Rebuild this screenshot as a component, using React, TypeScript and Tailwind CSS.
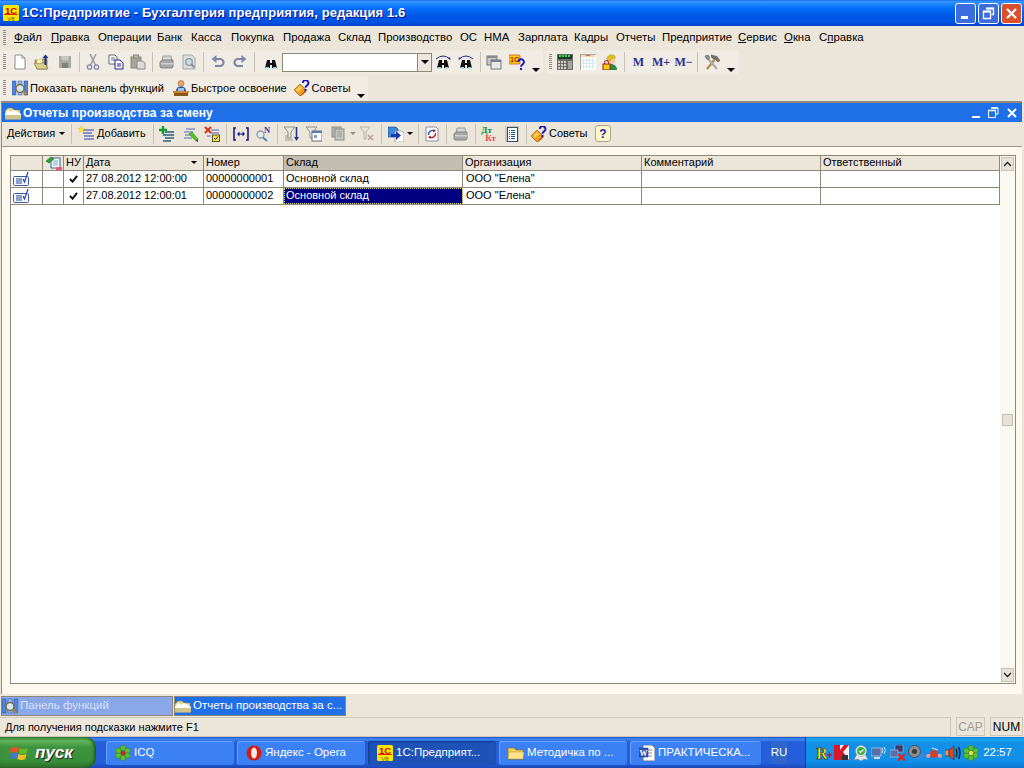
import React from "react";

const sans = "font-['Liberation_Sans',Arial,sans-serif]";

const Svg = ({ children, size = 16, crisp }: { children: React.ReactNode; size?: number; crisp?: boolean }) => (
  <svg width={size} height={size} viewBox="0 0 16 16" shapeRendering={crisp ? "crispEdges" : undefined} className="block shrink-0">
    {children}
  </svg>
);

const Logo1C = ({ size = 16 }: { size?: number }) => (
  <Svg size={size}>
    <rect width="16" height="16" rx="1.5" fill="#ffe600" />
    <text x="8" y="8.500" textAnchor="middle" fontSize="9.500" fontWeight="700" fill="#d40000" fontFamily="Liberation Sans">1С</text>
    <rect x="1" y="9" width="14" height="0.8" fill="#d40000" />
    <text x="8" y="15.500" textAnchor="middle" fontSize="6" fill="#6b5a00" fontFamily="Liberation Sans">V8</text>
  </Svg>
);

const NewDoc = () => (
  <Svg><path d="M3 1h7l3 3v11H3z" fill="#fff" stroke="#8d8d8d" /><path d="M10 1v3h3" fill="#e4e4e4" stroke="#8d8d8d" /></Svg>
);
const OpenFolder = () => (
  <Svg>
    <path d="M1 6h5l1-1h6v10H3z" fill="#b9b06a" stroke="#77703c" strokeWidth=".7" />
    <path d="M0 9h11l3 6H3z" fill="#d8cf8e" stroke="#77703c" strokeWidth=".7" />
    <path d="M3 6l5-1v4H3z" fill="#fff6b8" />
    <path d="M11.5 11V3" stroke="#1a2f8c" strokeWidth="2" /><path d="M8.5 4l3-3.5 3 3.5z" fill="#1a2f8c" />
  </Svg>
);
const Save = () => (
  <Svg><rect x="2" y="2" width="12" height="12" fill="#a9a9a1" /><rect x="4.5" y="2" width="7" height="4.5" fill="#c9c9c2" /><rect x="5" y="9" width="6" height="5" fill="#80807a" /></Svg>
);
const Scissors = () => (
  <Svg>
    <path d="M5 0l5.500 11M11 0L5.500 11" stroke="#9a9a9a" strokeWidth="1.500" fill="none" />
    <circle cx="4.500" cy="13" r="2.200" fill="none" stroke="#7f87a8" strokeWidth="1.300" />
    <circle cx="11.500" cy="13" r="2.200" fill="none" stroke="#7f87a8" strokeWidth="1.300" />
  </Svg>
);
const Copy = () => (
  <Svg>
    <path d="M1 1h6l2 2v7H1z" fill="#fff" stroke="#666" />
    <path d="M3 4h4M3 6h4" stroke="#666" />
    <path d="M7 6h5l3 3v6H7z" fill="#fff" stroke="#1c1f88" />
    <path d="M9 10h4M9 12h4" stroke="#1c1f88" />
  </Svg>
);
const Paste = () => (
  <Svg>
    <rect x="1" y="3" width="10" height="11" fill="#a8a498" stroke="#88857a" />
    <rect x="3.500" y="1" width="5" height="3" fill="#bdbab0" stroke="#88857a" />
    <path d="M7 7h5l3 2v6H7z" fill="#dcdcd8" stroke="#8a8a8a" />
  </Svg>
);
const Printer = () => (
  <Svg>
    <path d="M4 2h8l1 5H3z" fill="#d6d6d6" stroke="#9a9a9a" />
    <path d="M1 8l2-2h11v7l-1 1H2l-1-1z" fill="#a7a7a7" stroke="#858585" />
    <rect x="2" y="9" width="12" height="1.500" fill="#d0d0d0" />
  </Svg>
);
const Preview = () => (
  <Svg>
    <path d="M2 1h9l3 3v11H2z" fill="#dedede" stroke="#a5a5a5" />
    <circle cx="8" cy="8" r="3.300" fill="#c8dde3" stroke="#8a9aa2" strokeWidth="1.300" />
    <path d="M10.500 10.500l3 3" stroke="#8a8a8a" strokeWidth="1.800" />
  </Svg>
);
const Undo = ({ flip }: { flip?: boolean }) => (
  <Svg>
    <g transform={flip ? "matrix(-1 0 0 1 16 0)" : undefined}>
      <path d="M5 5h5a3.500 3.500 0 010 7H5" fill="none" stroke="#7e86a8" strokeWidth="2.200" />
      <path d="M6.500 1L1.500 5l5 4z" fill="#7e86a8" />
    </g>
  </Svg>
);
const Binoculars = ({ arc }: { arc?: "next" | "prev" }) => (
  <Svg>
    {arc && <path d="M1 5Q8 -1 15 5" fill="none" stroke="#1c2f8c" strokeWidth="1" />}
    {arc === "next" && <path d="M15.500 6l-.5-3-2 1.500z" fill="#1c2f8c" />}
    {arc === "prev" && <path d="M.5 6l.5-3 2 1.500z" fill="#1c2f8c" />}
    <path d="M4 6h3v3h2V6h3l2 8H9v-3H7v3H2z" fill="#111" />
    <rect x="2.500" y="13" width="3.500" height="1.500" fill="#7fd8d8" />
    <rect x="10" y="13" width="3.500" height="1.500" fill="#7fd8d8" />
  </Svg>
);
const Windows = () => (
  <Svg>
    <rect x="1" y="2" width="10" height="9" fill="#c9c9c4" stroke="#777" />
    <rect x="1" y="2" width="10" height="2" fill="#8a8a8a" />
    <rect x="5" y="6" width="10" height="9" fill="#e8e8e4" stroke="#777" />
    <rect x="5" y="6" width="10" height="2" fill="#6f7f9e" />
  </Svg>
);
const Question = ({ x = 0, y = 0 }: { x?: number; y?: number }) => (
  <g transform={`translate(${x} ${y})`}>
    <path d="M.8 3a2.800 2.800 0 115.400 1c-.6 1.500-2.700 1.800-2.700 3.800" fill="none" stroke="#1414c0" strokeWidth="1.900" />
    <rect x="2.500" y="9" width="2" height="2" fill="#1414c0" />
  </g>
);
const Help1C = () => (
  <Svg>
    <rect x="0" y="1" width="11" height="9" rx="1" fill="#ffd800" stroke="#c33" strokeWidth=".7" />
    <text x="5.500" y="8" textAnchor="middle" fontSize="7" fontWeight="700" fill="#c00000" fontFamily="Liberation Sans">1С</text>
    <Question x={8.500} y={5} />
  </Svg>
);
const Calc = () => (
  <Svg crisp>
    <rect x="0" y="0" width="16" height="16" fill="#6d6d68" />
    <rect x="1" y="1" width="14" height="4" fill="#1f3a23" />
    <path d="M2 2h2M5 2h2M8 2h2M11 2h2" stroke="#36e05c" strokeWidth="2" />
    <g fill="#cfcfc8"><rect x="1" y="7" width="2" height="2" /><rect x="4" y="7" width="2" height="2" /><rect x="7" y="7" width="2" height="2" /><rect x="1" y="10" width="2" height="2" /><rect x="4" y="10" width="2" height="2" /><rect x="7" y="10" width="2" height="2" /><rect x="1" y="13" width="2" height="2" /><rect x="4" y="13" width="2" height="2" /><rect x="7" y="13" width="2" height="2" /></g>
    <rect x="11" y="7" width="4" height="8" fill="#a5a59e" />
  </Svg>
);
const Calendar = () => (
  <Svg crisp>
    <rect x="0" y="0" width="16" height="16" fill="#fff" stroke="#a8a8a0" />
    <rect x="1" y="1" width="14" height="2" fill="#f4d9a8" />
    <rect x="6" y="1" width="4" height="1" fill="#e55" />
    <g stroke="#cfeaf0" strokeWidth="1"><path d="M3 4v11M6 4v11M9 4v11M12 4v11M1 6h14M1 9h14M1 12h14" /></g>
  </Svg>
);
const UserLock = () => (
  <Svg>
    <path d="M4 16c0-4 2-6 5-6s6 2 6 6z" fill="#2f8a4a" />
    <circle cx="9.500" cy="6" r="4" fill="#f0c8a0" />
    <path d="M5 7c-1-5 3-7 6-6 2 .5 3 2 2 3-3 0-4 1-5 3z" fill="#e0c020" stroke="#a08a10" strokeWidth=".4" />
    <rect x="1" y="10" width="7" height="6" fill="#f4d000" stroke="#a01818" />
    <path d="M2.500 10V8.500a2 2 0 014 0V10" fill="none" stroke="#a01818" />
  </Svg>
);
const Tools = () => (
  <Svg>
    <path d="M3 15L11 5" stroke="#b98b4a" strokeWidth="2.200" />
    <path d="M7 1l6 1.500 3 4-2 1.500-2.500-2.500L8 4z" fill="#777" stroke="#444" strokeWidth=".5" />
    <path d="M13 15L5 6" stroke="#a8a8a8" strokeWidth="2" />
    <path d="M1 2l3-1 1.500 2L5 6 2.500 5z" fill="#8d8d8d" stroke="#555" strokeWidth=".5" />
  </Svg>
);
const PanelFunc = () => (
  <Svg>
    <rect x="0" y="1" width="4" height="14" fill="#4e86d8" stroke="#1e4aa0" strokeWidth=".5" />
    <rect x="6" y="1" width="4" height="14" fill="#9cbdf0" stroke="#1e4aa0" strokeWidth=".5" />
    <rect x="12" y="1" width="4" height="14" fill="#4e86d8" stroke="#1e4aa0" strokeWidth=".5" />
    <circle cx="8" cy="8.500" r="4" fill="#e8f4f4" fillOpacity=".8" stroke="#7a6a3a" strokeWidth="1.400" />
    <path d="M11 11.500l3.500 3.500" stroke="#b8862a" strokeWidth="2" />
  </Svg>
);
const Learn = () => (
  <Svg>
    <circle cx="8" cy="3.500" r="3" fill="#e8a868" stroke="#8a4a1a" strokeWidth=".5" />
    <path d="M3 11c0-3 2-4.500 5-4.500s5 1.500 5 4.500z" fill="#2c55a8" />
    <rect x="5" y="8" width="6" height="3.500" fill="#9cc0ec" />
    <rect x="0" y="11" width="16" height="2" fill="#c8862c" />
    <rect x="1" y="13" width="14" height="3" fill="#8a5518" />
  </Svg>
);
const Tips = () => (
  <Svg>
    <path d="M0 10l6-6 6 6-6 6z" fill="#f4a018" stroke="#8a4a0a" strokeWidth=".6" />
    <path d="M2 10l4-4 2 2-4 4z" fill="#ffd060" />
    <path d="M6 16l6-6v2l-5 4z" fill="#c04a0a" />
    <Question x={8} y={0} />
  </Svg>
);
const Folder = () => (
  <Svg>
    <path d="M0 6l3-3h4l2 2h6v9H0z" fill="#e6d98a" stroke="#8f8752" strokeWidth=".5" />
    <path d="M0 9l3-4 3 2 3-2 4 2 3 2v5H0z" fill="#fff" />
    <path d="M0 10h16v4.500H0z" fill="#cfc58c" />
  </Svg>
);
const YellowFolder = () => (
  <Svg>
    <path d="M0 3h6l2 2h7v9H0z" fill="#f4cf5c" stroke="#8f6f1c" strokeWidth=".6" />
    <path d="M1 7h15l-1 7H0z" fill="#ffe38a" stroke="#a8842c" strokeWidth=".5" />
  </Svg>
);
const AddList = () => (
  <Svg>
    <path d="M5 4h11M5 7h9M6 10h10M6 13h10" stroke="#8b90c4" strokeWidth="2" />
    <path d="M3.500 0l1 2 2.500.5-2 1.500.5 2.500-2-1.200-2 1.200.5-2.500-2-1.500 2.500-.5z" fill="#ffe84a" stroke="#d6b820" strokeWidth=".4" />
  </Svg>
);
const PlusList = () => (
  <Svg>
    <path d="M6 6h9M4 9h11M6 12h9M4 15h8" stroke="#2a5f7f" strokeWidth="1.500" />
    <path d="M4 0v8M0 4h8" stroke="#11a02a" strokeWidth="2.400" />
  </Svg>
);
const EditList = () => (
  <Svg>
    <path d="M4 3h9M2 6h9M3 9h8M2 12h8" stroke="#8b90c4" strokeWidth="1.700" />
    <path d="M7 8l3-2 6 7-2 2z" fill="#50c820" stroke="#2a7a10" strokeWidth=".5" />
    <path d="M14 15l2-2v3z" fill="#2a2a2a" />
  </Svg>
);
const DelList = () => (
  <Svg>
    <path d="M7 4h8M7 7h8M3 10h4" stroke="#8b90c4" strokeWidth="1.700" />
    <path d="M1 1l6 6M7 1L1 7" stroke="#d8301a" strokeWidth="2" />
    <rect x="8.500" y="9" width="7" height="6.500" fill="#f4e060" stroke="#5a5a20" />
    <path d="M10 12l1.500 1.500 2.500-3" stroke="#222" fill="none" />
  </Svg>
);
const Braces = () => (
  <Svg>
    <path d="M3 2H1v12h2M13 2h2v12h-2" stroke="#10108a" strokeWidth="1.500" fill="none" />
    <path d="M5 8h6" stroke="#10108a" strokeWidth="1" />
    <path d="M6.500 5.500L4 8l2.500 2.500zM9.500 5.500L12 8l-2.500 2.500z" fill="#10108a" />
  </Svg>
);
const SearchN = () => (
  <Svg>
    <circle cx="5.500" cy="8.500" r="3.500" fill="#dff0f4" stroke="#8e9aa4" strokeWidth="1.300" />
    <path d="M8 11.500l4 3.500" stroke="#3d8ac4" strokeWidth="2" />
    <text x="12" y="7" textAnchor="middle" fontSize="8.500" fontWeight="700" fill="#2b3fb0" fontFamily="Liberation Serif">N</text>
  </Svg>
);
const Funnel = ({ color = "#8f8f88" }: { color?: string }) => (
  <path d="M0 1h11L7 6v6H4V6z" fill="#e8e8e0" stroke={color} strokeWidth="1" />
);
const FilterDown = () => (
  <Svg>
    <Funnel />
    <path d="M12.500 1v11" stroke="#223a8c" strokeWidth="1.600" />
    <path d="M10 11l2.500 4 2.500-4z" fill="#223a8c" />
    <path d="M1 10h3M1 12h3M1 14h8" stroke="#999" />
  </Svg>
);
const FilterWin = () => (
  <Svg>
    <Funnel />
    <rect x="6" y="5" width="10" height="10" fill="#fff" stroke="#707070" />
    <rect x="6" y="5" width="10" height="2" fill="#5c7ab0" />
    <rect x="8" y="9" width="3" height="3" fill="#7e9fd0" />
  </Svg>
);
const FilterStack = () => (
  <Svg>
    <rect x="1" y="1" width="9" height="10" fill="#b5b5ae" stroke="#8e8e88" />
    <rect x="4" y="3" width="9" height="11" fill="#c5c5be" stroke="#8e8e88" />
    <path d="M6 6h5M6 8h5M6 10h5" stroke="#9a9a94" />
  </Svg>
);
const FilterOff = () => (
  <Svg>
    <path d="M1 1h10L7 6v7H5V6z" fill="#e8e4d8" stroke="#b5b2a6" />
    <path d="M9 9l5 5M14 9l-5 5" stroke="#b79f96" strokeWidth="1.400" />
  </Svg>
);
const Export = () => (
  <Svg>
    <path d="M0 1h8l2 2v8H0z" fill="#3a8ae0" stroke="#16408a" strokeWidth=".6" />
    <path d="M7 5h6l3 2v9H7z" fill="#fff" stroke="#777" strokeWidth=".6" />
    <path d="M3 8h5V5l5 4.500L8 14v-3H3z" fill="#1a3aa8" />
  </Svg>
);
const Refresh = () => (
  <Svg>
    <path d="M2 1h10l2 2v12H2z" fill="#fff" stroke="#8c8ca8" />
    <path d="M4.500 9a4 4 0 016-4" fill="none" stroke="#2a50c0" strokeWidth="1.300" />
    <path d="M11.500 7a4 4 0 01-6 4" fill="none" stroke="#c02020" strokeWidth="1.300" />
    <path d="M9.500 3l2.500 2-3 1.200zM6.500 13l-2.500-2 3-1.200z" fill="#a01818" />
  </Svg>
);
const DtKt = () => (
  <div className="w-4 h-4 flex flex-col font-['Liberation_Serif',serif] font-bold text-[9px] leading-[8px]">
    <span className="text-[#108a30]">Дт</span>
    <span className="text-[#f04848] ml-[4px]">Кт</span>
  </div>
);
const DocList = () => (
  <Svg crisp>
    <rect x="1" y="0" width="14" height="16" fill="#c8c8c0" />
    <rect x="3" y="1" width="10" height="14" fill="#fff" stroke="#30506a" />
    <path d="M5 4h1M7 4h4M5 6h1M7 6h4M5 8h1M7 8h4M5 10h1M7 10h4M5 12h1M7 12h4" stroke="#1a5a88" />
  </Svg>
);
const RowDoc = () => (
  <svg width="16" height="14" viewBox="0 0 16 14" className="block">
    <rect x=".5" y="4.500" width="15" height="9" rx="1" fill="#f2f5fb" stroke="#3d5d98" />
    <path d="M3 7h6M3 9h6M3 11h6" stroke="#2a4f90" />
    <path d="M10 7l1.500 3L15 0" stroke="#2a3fc0" strokeWidth="1.200" fill="none" />
  </svg>
);
const HeaderPic = () => (
  <Svg>
    <path d="M5 3h9v10H5z" fill="#fff" stroke="#1e6a98" />
    <path d="M7 6h5M7 8h5M7 10h5" stroke="#5ab0d8" />
    <path d="M0 6l5-4 3 2-5 4z" fill="#30a030" stroke="#155a15" strokeWidth=".5" />
    <rect x="10" y="12" width="6" height="3" fill="#f05a7a" />
  </Svg>
);
const Flower = ({ center = "#d42020" }: { center?: string }) => (
  <Svg>
    <g fill="#5cc030" stroke="#2f7a16" strokeWidth=".5">
      <circle cx="8" cy="3" r="2.700" /><circle cx="12.500" cy="5.700" r="2.700" /><circle cx="12.500" cy="10.500" r="2.700" />
      <circle cx="8" cy="13" r="2.700" /><circle cx="3.500" cy="10.500" r="2.700" /><circle cx="3.500" cy="5.700" r="2.700" />
    </g>
    <circle cx="8" cy="8" r="2.200" fill={center} />
  </Svg>
);
const Opera = () => (
  <Svg><circle cx="8" cy="8" r="7.500" fill="#d81a10" /><ellipse cx="8" cy="8" rx="3" ry="5.500" fill="#fbe9e2" /></Svg>
);
const Word = () => (
  <Svg>
    <path d="M4 0h9l3 3v13H4z" fill="#fff" stroke="#778" />
    <path d="M7 5h6M7 8h6M7 11h6" stroke="#88a" />
    <rect x="0" y="3" width="9" height="9" fill="#2f55c0" stroke="#16307a" strokeWidth=".5" />
    <text x="4.500" y="10.500" textAnchor="middle" fontSize="8" fontWeight="700" fill="#fff" fontFamily="Liberation Serif">W</text>
  </Svg>
);
const XpFlag = () => (
  <svg width="20" height="20" viewBox="0 0 20 20" className="block">
    <path d="M1 5q4-2 8 0l-1.200 5q-4-2-8 0z" fill="#e8502a" />
    <path d="M10 5q4 2 8 0l-1.200 5q-4 2-8 0z" fill="#68b82a" />
    <path d="M-.200 11q4-2 8 0l-1.200 5q-4-2-8 0z" fill="#3a78e0" transform="translate(1.500 0)" />
    <path d="M8.500 11q4 2 8 0l-1.200 5q-4 2-8 0z" fill="#f4c020" />
  </svg>
);
const TrayR = () => (
  <Svg>
    <text x="6" y="14" textAnchor="middle" fontSize="16" fontWeight="700" fill="#ffe600" stroke="#111" strokeWidth=".5" fontFamily="Liberation Serif">R</text>
    <path d="M11 10h5M13.500 7.500v5" stroke="#e01010" strokeWidth="1.400" />
  </Svg>
);
const TrayK = () => (
  <Svg>
    <rect width="15" height="15" fill="#f4f4f4" />
    <path d="M0 0h6v5l4-5h5L9 7l6 8H0z" fill="#d8182a" />
    <path d="M8 10h6v5H8z" fill="#333" />
  </Svg>
);
const TrayBadge = () => (
  <Svg>
    <path d="M4 9l-3 6 4-1 3 2 3-2 4 1-3-6z" fill="#e8e8e8" stroke="#888" strokeWidth=".5" />
    <circle cx="8" cy="6" r="5.500" fill="#f0f0f0" stroke="#999" strokeWidth=".5" />
    <circle cx="8" cy="6" r="4" fill="#3fae3a" />
    <path d="M6 6l1.500 1.500 3-3" stroke="#fff" fill="none" strokeWidth="1.200" />
  </Svg>
);
const TrayNet = () => (
  <Svg>
    <rect x="0" y="3" width="10" height="8" fill="#5870a8" stroke="#dde" strokeWidth=".6" />
    <rect x="3" y="12" width="6" height="2" fill="#d8d8d8" />
    <path d="M11 3q2 2 0 5M13 2q3 3 0 7" fill="none" stroke="#dfe8f4" strokeWidth="1" />
  </Svg>
);
const TrayNetX = () => (
  <Svg>
    <rect x="5" y="0" width="8" height="7" fill="#3a3a6a" stroke="#bcc" strokeWidth=".5" />
    <rect x="0" y="5" width="8" height="7" fill="#5870a8" stroke="#dde" strokeWidth=".5" />
    <path d="M8 9l7 6.500M15 9l-7 6.500" stroke="#e8201a" strokeWidth="2" />
  </Svg>
);
const TraySpeaker = () => (
  <Svg>
    <circle cx="6.500" cy="6.500" r="6" fill="#8d8d8d" stroke="#333" strokeWidth=".6" />
    <circle cx="6.500" cy="6.500" r="2.500" fill="#3a3a3a" />
    <path d="M9 14q4-1 6-6" stroke="#6a7fe0" fill="none" strokeWidth="1.200" />
  </Svg>
);
const TrayMisc = () => (
  <Svg>
    <path d="M1 10h14" stroke="#ccc" strokeWidth="2" />
    <path d="M6 3l6 2" stroke="#dde" strokeWidth="1.300" />
    <circle cx="8" cy="9" r="4" fill="#cc4030" />
    <circle cx="2" cy="11" r="2" fill="#d8a090" />
    <circle cx="14" cy="11" r="2" fill="#d8a090" />
  </Svg>
);
const TrayVolume = () => (
  <Svg>
    <rect x="0" y="5" width="4" height="6" fill="#e89060" stroke="#222" strokeWidth=".5" />
    <path d="M4 5l5-4v14l-5-4z" fill="#d84a20" stroke="#222" strokeWidth=".5" />
    <path d="M11 4q2 4 0 8M13.500 2q3 6 0 12" fill="none" stroke="#111" strokeWidth="1.200" />
  </Svg>
);

const Grip = () => (
  <div className="h-[16px] w-[3px] ml-[3px] shrink-0 bg-[repeating-linear-gradient(to_bottom,#8f8b80_0,#8f8b80_1px,transparent_1px,transparent_2px)]" />
);
const Sep = () => <div className="w-px h-[20px] mx-[2.5px] bg-[#c5c0b4] shrink-0" />;
const Slot = ({ children }: { children: React.ReactNode }) => (
  <div className="w-[22.5px] h-full flex items-center justify-center shrink-0">{children}</div>
);
const DropArrow = () => (
  <div className="w-[15px] h-full flex items-end justify-center pb-[2px] shrink-0">
    <div className="w-0 h-0 border-x-[4px] border-x-transparent border-t-[4px] border-t-black" />
  </div>
);
const SmallArrow = ({ gray }: { gray?: boolean }) => (
  <div className={`w-0 h-0 border-x-[3px] border-x-transparent border-t-[3px] ${gray ? "border-t-[#8f8f88]" : "border-t-black"}`} />
);
const MText = ({ children }: { children: string }) => (
  <span className="font-['Liberation_Serif',serif] font-bold text-[12px] text-[#2a2f96]">{children}</span>
);

const menu: [string, number, number?][] = [
  ["Файл", 37, 0], ["Правка", 47, 0], ["Операции", 59], ["Банк", 34], ["Касса", 40], ["Покупка", 52],
  ["Продажа", 55], ["Склад", 40], ["Производство", 82], ["ОС", 24], ["НМА", 34], ["Зарплата", 56],
  ["Кадры", 42], ["Отчеты", 46], ["Предприятие", 76], ["Сервис", 46, 0], ["Окна", 35, 0], ["Справка", 60, 1],
];

const TitleBar = () => (
  <div className="h-[26px] shrink-0 flex items-center pl-[3px] pr-[2px] bg-[linear-gradient(to_bottom,#0a5ae0_0,#3a93ff_1px,#288eff_3px,#127dff_6px,#036ffc_8px,#0262ee_12px,#0057e5_16px,#0054e3_22px,#0045cf_25px,#003dd7_26px)]">
    <Logo1C />
    <span className={`ml-[3px] ${sans} font-bold text-[13px] tracking-[0.1px] text-white [text-shadow:1px_1px_0_#0f1089]`}>
      1С:Предприятие - Бухгалтерия предприятия, редакция 1.6
    </span>
    <div className="ml-auto flex gap-[2px]">
      <div className="w-[21px] h-[21px] rounded-[3px] border border-white bg-[#3c6de0] flex items-end pl-[5px] pb-[4px]">
        <div className="w-[7px] h-[3px] bg-white" />
      </div>
      <div className="w-[21px] h-[21px] rounded-[3px] border border-white bg-[#3c6de0] flex items-center justify-center">
        <svg width="13" height="13" viewBox="0 0 13 13"><path d="M4.500 1.500h7v6h-2M1.500 4.500h7v7h-7z" fill="none" stroke="#fff" strokeWidth="1.300" /><path d="M4 1.500h8M1 4.500h8" stroke="#fff" strokeWidth="2" /></svg>
      </div>
      <div className="w-[21px] h-[21px] rounded-[3px] border border-white bg-[#d9512c] flex items-center justify-center">
        <svg width="13" height="13" viewBox="0 0 13 13"><path d="M2 2l9 9M11 2l-9 9" stroke="#fff" strokeWidth="2.200" /></svg>
      </div>
    </div>
  </div>
);

const MenuBar = () => (
  <div className={`h-[23px] shrink-0 flex items-center pt-px text-[11.4px] text-black ${sans}`}>
    <Grip />
    <div className="w-[8px]" />
    {menu.map(([label, width, ul]) => (
      <div key={label} className="shrink-0" style={{ width }}>
        {ul === undefined ? label : (
          <>
            {label.slice(0, ul)}
            <span className="underline">{label[ul]}</span>
            {label.slice(ul + 1)}
          </>
        )}
      </div>
    ))}
  </div>
);

const MainToolbar = () => (
  <div className="h-[26px] shrink-0 flex gap-[3px]">
    <div className="w-[543px] h-[24px] mt-[1px] flex items-center bg-[#f0ece4] rounded-r-[3px]">
      <Grip />
      <div className="w-[2.5px]" />
      <Slot><NewDoc /></Slot>
      <Slot><OpenFolder /></Slot>
      <Slot><Save /></Slot>
      <Sep />
      <Slot><Scissors /></Slot>
      <Slot><Copy /></Slot>
      <Slot><Paste /></Slot>
      <Sep />
      <Slot><Printer /></Slot>
      <Slot><Preview /></Slot>
      <Sep />
      <Slot><Undo /></Slot>
      <Slot><Undo flip /></Slot>
      <Sep />
      <div className="w-[2px]" />
      <Slot><Binoculars /></Slot>
      <div className="w-[136px] h-[19px] bg-white border border-[#8c8878]" />
      <div className="w-[14px] h-[19px] flex items-center justify-center bg-[#ebe7dc] border-y border-r border-[#8c8878]">
        <div className="w-0 h-0 border-x-[4px] border-x-transparent border-t-[4px] border-t-black" />
      </div>
      <Slot><Binoculars arc="next" /></Slot>
      <Slot><Binoculars arc="prev" /></Slot>
      <Sep />
      <Slot><Windows /></Slot>
      <Slot><Help1C /></Slot>
      <DropArrow />
    </div>
    <div className="w-[193px] h-[24px] mt-[1px] flex items-center bg-[#f0ece4] rounded-r-[3px]">
      <Grip />
      <div className="w-[1.75px]" />
      <Slot><Calc /></Slot>
      <Slot><Calendar /></Slot>
      <Slot><UserLock /></Slot>
      <Sep />
      <Slot><MText>M</MText></Slot>
      <Slot><MText>M+</MText></Slot>
      <Slot><MText>M−</MText></Slot>
      <Sep />
      <Slot><Tools /></Slot>
      <DropArrow />
    </div>
  </div>
);

const QuickBar = () => (
  <div className="h-[26px] shrink-0 pt-px">
    <div className={`w-[368px] h-[24px] flex items-center bg-[#f0ece4] rounded-r-[3px] text-[11.1px] text-black ${sans}`}>
      <Grip />
      <div className="w-[6px]" />
      <PanelFunc />
      <span className="ml-[2px] w-[145px]">Показать панель функций</span>
      <Learn />
      <span className="ml-[2px] w-[104px]">Быстрое освоение</span>
      <Tips />
      <span className="ml-[2px] w-[42px]">Советы</span>
      <DropArrow />
    </div>
  </div>
);

const ChildToolbar = () => (
  <div className={`h-[25px] shrink-0 flex items-center pb-px bg-[#ebe5da] border-b border-[#9a9588] text-[11px] text-black ${sans}`}>
    <div className="w-[66.5px] flex items-center gap-[4px] pl-[5px]">
      Действия <SmallArrow />
    </div>
    <Sep />
    <Slot><AddList /></Slot>
    <span className="w-[53px]">Добавить</span>
    <Sep />
    <Slot><PlusList /></Slot>
    <Slot><EditList /></Slot>
    <Slot><DelList /></Slot>
    <Sep />
    <Slot><Braces /></Slot>
    <Slot><SearchN /></Slot>
    <Sep />
    <Slot><FilterDown /></Slot>
    <Slot><FilterWin /></Slot>
    <div className="w-[2px]" />
    <Slot><FilterStack /></Slot>
    <div className="w-[6px]"><SmallArrow gray /></div>
    <Slot><FilterOff /></Slot>
    <Sep />
    <Slot><Export /></Slot>
    <div className="w-[8px]"><SmallArrow /></div>
    <Sep />
    <Slot><Refresh /></Slot>
    <Sep />
    <Slot><Printer /></Slot>
    <Sep />
    <Slot><DtKt /></Slot>
    <Slot><DocList /></Slot>
    <Sep />
    <div className="w-[20px] flex justify-center"><Tips /></div>
    <span className="w-[46px]">Советы</span>
    <div className="w-[16px] h-[17px] rounded-[3px] bg-[#fff8c8] border border-[#a8a494] flex items-center justify-center font-bold text-[12px] text-[#1a1ab0]">?</div>
  </div>
);

const gridCols = "grid-cols-[32px_21px_20px_120px_80px_179px_179px_179px_179px]";
const headers = ["", "", "НУ", "Дата", "Номер", "Склад", "Организация", "Комментарий", "Ответственный"];
const rows = [
  ["27.08.2012 12:00:00", "00000000001"],
  ["27.08.2012 12:00:01", "00000000002"],
];

const ScrollButton = ({ up }: { up?: boolean }) => (
  <div className="h-[14px] mx-px shrink-0 bg-[#e6e2d6] border border-[#c8c4b6] flex items-center justify-center">
    <svg width="9" height="6" viewBox="0 0 9 6"><path d={up ? "M1 5l3.500-3.500L8 5" : "M1 1l3.500 3.500L8 1"} fill="none" stroke="#222" strokeWidth="1.300" /></svg>
  </div>
);

const Grid = () => (
  <div className={`flex-1 flex border border-[#8d8878] bg-white text-[11px] leading-none text-black ${sans}`}>
    <div className="flex-1 min-w-0 flex flex-col">
      <div className={`grid ${gridCols} h-[15px] bg-[#ebe5da] border-b border-[#8d8878]`}>
        {headers.map((h, i) => (
          <div
            key={i}
            className={`border-r border-[#8d8878] flex items-center pl-[2px] pb-px overflow-hidden ${i === 5 ? "bg-[#c4bdb1]" : ""}`}
          >
            {i === 1 ? <div className="ml-[1px]"><HeaderPic /></div> : h}
            {i === 3 && <div className="ml-auto mr-[6px]"><SmallArrow /></div>}
          </div>
        ))}
      </div>
      {rows.map(([date, num], idx) => (
        <div key={num} className={`grid ${gridCols} h-[17px] border-b border-[#8d8878]`}>
          <div className="border-r border-[#8d8878] flex items-center pl-[2px]"><RowDoc /></div>
          <div className="border-r border-[#8d8878]" />
          <div className="border-r border-[#8d8878] flex items-center justify-center">
            <svg width="9" height="8" viewBox="0 0 10 9"><path d="M1 4.500l3 3L9 1" fill="none" stroke="#111" strokeWidth="2.200" /></svg>
          </div>
          <div className="border-r border-[#8d8878] flex items-center pl-[2px] pb-px">{date}</div>
          <div className="border-r border-[#8d8878] flex items-center pl-[2px] pb-px">{num}</div>
          <div
            className={`border-r border-[#8d8878] flex items-center pl-[2px] pb-px ${
              idx === 1 ? "bg-[#000080] text-white outline-1 outline-dotted outline-[#e8e060] -outline-offset-1" : ""
            }`}
          >
            Основной склад
          </div>
          <div className="border-r border-[#8d8878] flex items-center pl-[3px] pb-px">ООО "Елена"</div>
          <div className="border-r border-[#8d8878]" />
          <div className="border-r border-[#8d8878]" />
        </div>
      ))}
    </div>
    <div className="w-[15px] shrink-0 flex flex-col bg-[#fbf8ef] pt-px pb-px">
      <ScrollButton up />
      <div className="flex-1 flex items-center">
        <div className="w-[11px] h-[12px] mx-[2px] bg-[#e6e2d6] border border-[#c0bcae]" />
      </div>
      <ScrollButton />
    </div>
  </div>
);

const ChildWindow = () => (
  <div className="h-[593px] ml-px mr-[2px] border-l border-t-2 border-[#8f8b7f] flex flex-col shrink-0">
    <div className="h-[19px] shrink-0 flex items-center pl-[3px] bg-[#1f6fe8] text-white">
      <Folder />
      <span className={`ml-[2px] ${sans} font-bold text-[12px] tracking-[0.1px]`}>Отчеты производства за смену</span>
      <div className="ml-auto flex items-center gap-[8px] pr-[5px]">
        <div className="w-[8px] h-[2px] bg-white mt-[9px]" />
        <svg width="11" height="11" viewBox="0 0 11 11"><path d="M3.500 1h6.500v6h-2.500M.5 3.500h7v7h-7z" fill="none" stroke="#fff" /><path d="M3 1h7M0 3.500h8" stroke="#fff" strokeWidth="1.500" /></svg>
        <svg width="10" height="10" viewBox="0 0 10 10"><path d="M1 1l8 8M9 1l-8 8" stroke="#fff" strokeWidth="2" /></svg>
      </div>
    </div>
    <ChildToolbar />
    <div className="flex-1 flex bg-[#fdf9ef] pl-[8px] pr-[8px] pt-[8px] pb-[10px] min-h-0">
      <Grid />
    </div>
  </div>
);

const Tabs = () => (
  <div className={`h-[23px] shrink-0 flex gap-px pl-px pt-[2px] text-[11.5px] ${sans}`}>
    <div className="w-[172px] h-[20px] flex items-center bg-[#8aa8e8] border border-[#8b8778] text-[#d8e0f4]">
      <PanelFunc />
      <span className="ml-[2px]">Панель функций</span>
    </div>
    <div className="w-[172px] h-[20px] flex items-center bg-[#1f6fe8] border border-[#8b8778] text-white">
      <Folder />
      <span className="ml-[2px]">Отчеты производства за с...</span>
    </div>
  </div>
);

const StatusBar = () => (
  <div className={`h-[20px] shrink-0 flex gap-[5px] text-[11px] text-black ${sans}`}>
    <div className="w-[951px] border-y border-r border-[#cdc8ba] pl-[5px] flex items-center">
      Для получения подсказки нажмите F1
    </div>
    <div className="w-[29px] mb-px border border-[#cdc8ba] text-[#a09c90] flex items-center justify-center text-[12px]">CAP</div>
    <div className="w-[33px] mb-px border border-[#cdc8ba] flex items-center justify-center text-[12px]">NUM</div>
  </div>
);

const TaskButton = ({ icon, label, active, width = 128 }: { icon: React.ReactNode; label: string; active?: boolean; width?: number }) => (
  <div
    className={`h-[24px] shrink-0 flex items-center gap-[3px] pl-[9px] rounded-[3px] text-white text-[11.5px] ${
      active ? "bg-[#1e52b7] shadow-[inset_1px_1px_2px_#123a8c]" : "bg-[#3c81f3] shadow-[inset_1px_1px_0_#6ea2f8]"
    }`}
    style={{ width }}
  >
    {icon}
    <span className="whitespace-nowrap overflow-hidden">{label}</span>
  </div>
);

const Taskbar = () => (
  <div className={`h-[31px] shrink-0 flex items-center bg-[linear-gradient(to_bottom,#1f4bc0_0,#3f8cf3_2px,#245edb_5px,#245edb_26px,#1b48b8_31px)] ${sans}`}>
    <div className="w-[96px] h-full shrink-0 flex items-center pl-[10px] gap-[5px] rounded-r-[10px] bg-[linear-gradient(to_bottom,#3c8a3c_0,#5fb35a_4px,#3f953f_10px,#3a8f3a_24px,#2f6f2f_31px)] shadow-[inset_-2px_0_3px_#1f5a1f]">
      <XpFlag />
      <span className="text-white font-bold italic text-[17px] [text-shadow:1px_1px_1px_#222]">пуск</span>
    </div>
    <div className="w-[10px] shrink-0" />
    <div className="flex gap-[3px]">
      <TaskButton icon={<Flower />} label="ICQ" />
      <TaskButton icon={<Opera />} label="Яндекс - Opera" />
      <TaskButton icon={<Logo1C />} label="1С:Предприят..." active />
      <TaskButton icon={<YellowFolder />} label="Методичка по ..." />
      <TaskButton icon={<Word />} label="ПРАКТИЧЕСКА..." width={131} />
    </div>
    <div className="ml-[10px] w-[16px] h-[22px] bg-[#2f66c8] text-white text-[11.5px] flex items-center justify-center">RU</div>
    <div className="ml-auto h-full w-[219px] flex items-center border-l border-[#0e3a8e] bg-[linear-gradient(to_bottom,#0f6fd8_0,#18a8f0_2px,#1290e8_6px,#1090e8_24px,#0c78d4_31px)] pl-[10px]">
      <div className="flex gap-[2.4px]">
        <TrayR /><TrayK /><TrayBadge /><TrayNet /><TrayNetX /><TraySpeaker /><TrayMisc /><TrayVolume /><Flower center="#f0e040" />
      </div>
      <span className="ml-[4px] text-white text-[11.5px]">22:57</span>
    </div>
  </div>
);

export default function App() {
  return (
    <div className="w-[1024px] h-[768px] overflow-hidden flex flex-col bg-[#ebe5da]">
      <TitleBar />
      <MenuBar />
      <MainToolbar />
      <QuickBar />
      <ChildWindow />
      <Tabs />
      <StatusBar />
      <Taskbar />
    </div>
  );
}
